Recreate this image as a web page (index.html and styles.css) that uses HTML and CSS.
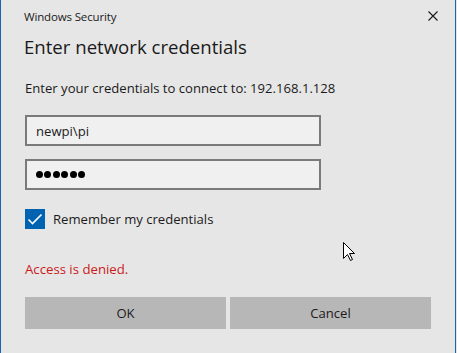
FILE: index.html
```html
<!DOCTYPE html>
<html lang="en">
<head>
<meta charset="utf-8">
<title>Windows Security</title>
<link rel="stylesheet" href="styles.css">
</head>
<body>
<div class="dialog">
  <div class="titlebar">
    <span class="app-name">Windows Security</span>
    <svg class="close" width="10" height="10" viewBox="0 0 10 10" aria-label="Close">
      <path d="M0.5 0.5 L9.5 9.5 M9.5 0.5 L0.5 9.5" stroke="#1a1a1a" stroke-width="1.1" fill="none"/>
    </svg>
  </div>
  <div class="content">
    <h1 class="heading">Enter network credentials</h1>
    <p class="prompt">Enter your credentials to connect to: 192.168.1.128</p>
    <div class="field">newpi\pi</div>
    <div class="field password" aria-label="Password">
      <span class="dot"></span><span class="dot"></span><span class="dot"></span><span class="dot"></span><span class="dot"></span><span class="dot"></span>
    </div>
    <div class="remember">
      <span class="checkbox">
        <svg width="20" height="20" viewBox="0 0 20 20">
          <path d="M3.5 10.5 L7.5 14.5 L16.5 5.5" stroke="#ffffff" stroke-width="1.6" fill="none"/>
        </svg>
      </span>
      <span class="remember-label">Remember my credentials</span>
    </div>
    <p class="error">Access is denied.</p>
    <div class="buttons">
      <button class="btn">OK</button>
      <button class="btn">Cancel</button>
    </div>
  </div>
  <svg class="cursor" width="13" height="20" viewBox="0 0 13 20">
    <path d="M0.5 0.5 L0.5 16.5 L4.5 12.5 L7.5 18.5 L9.5 17.5 L6.5 11.5 L11.5 11.5 Z" fill="#ffffff" stroke="#000000" stroke-width="1"/>
  </svg>
</div>
</body>
</html>
```

FILE: styles.css
```css
html, body {
  margin: 0;
  padding: 0;
  background: #e6e6e6;
}

.dialog {
  position: relative;
  box-sizing: border-box;
  width: 456px;
  height: 353px;
  background: #e6e6e6;
  border-left: 1px solid #1b64b4;
  border-right: 1px solid #1b64b4;
  font-family: "Open Sans", "Noto Sans", sans-serif;
  color: #1a1a1a;
}

.titlebar {
  display: flex;
  align-items: center;
  justify-content: space-between;
  height: 32px;
  padding: 0 17px 0 23px;
}

.app-name {
  font-size: 11.5px;
  letter-spacing: -0.15px;
  color: #1a1a1a;
}

.close {
  display: block;
}

.content {
  padding: 0 0 0 24px;
}

.heading {
  margin: 1px 0 0 -1px;
  font-size: 18.6px;
  font-weight: 400;
  line-height: 28px;
  color: #1a1a1a;
}

.prompt {
  margin: 17px 0 0 0;
  font-size: 13.1px;
  line-height: 20px;
}

.field {
  box-sizing: border-box;
  width: 296px;
  height: 31px;
  margin-top: 17px;
  border: 2px solid #7a7a7a;
  background: #f0f0f0;
  padding: 0 0 0 9px;
  display: flex;
  align-items: center;
  font-size: 13.1px;
}

.field.password {
  margin-top: 13px;
  gap: 1.4px;
  padding-left: 9px;
}

.dot {
  width: 7px;
  height: 7px;
  border-radius: 50%;
  background: #000000;
}

.remember {
  display: flex;
  align-items: center;
  gap: 8px;
  margin-top: 19px;
  height: 20px;
}

.checkbox {
  width: 20px;
  height: 20px;
  background: #0063b1;
  display: block;
}

.checkbox svg {
  display: block;
}

.remember-label {
  font-size: 13.1px;
}

.error {
  margin: 30px 0 0 0;
  font-size: 13.2px;
  line-height: 20px;
  color: #cc1a1a;
}

.buttons {
  display: flex;
  gap: 4px;
  margin-top: 18px;
}

.btn {
  width: 201px;
  height: 32px;
  border: none;
  background: #b7b7b7;
  font-family: "Open Sans", "Noto Sans", sans-serif;
  font-size: 13.1px;
  color: #1a1a1a;
  padding: 0;
}

.cursor {
  position: absolute;
  left: 342px;
  top: 242px;
}
```
